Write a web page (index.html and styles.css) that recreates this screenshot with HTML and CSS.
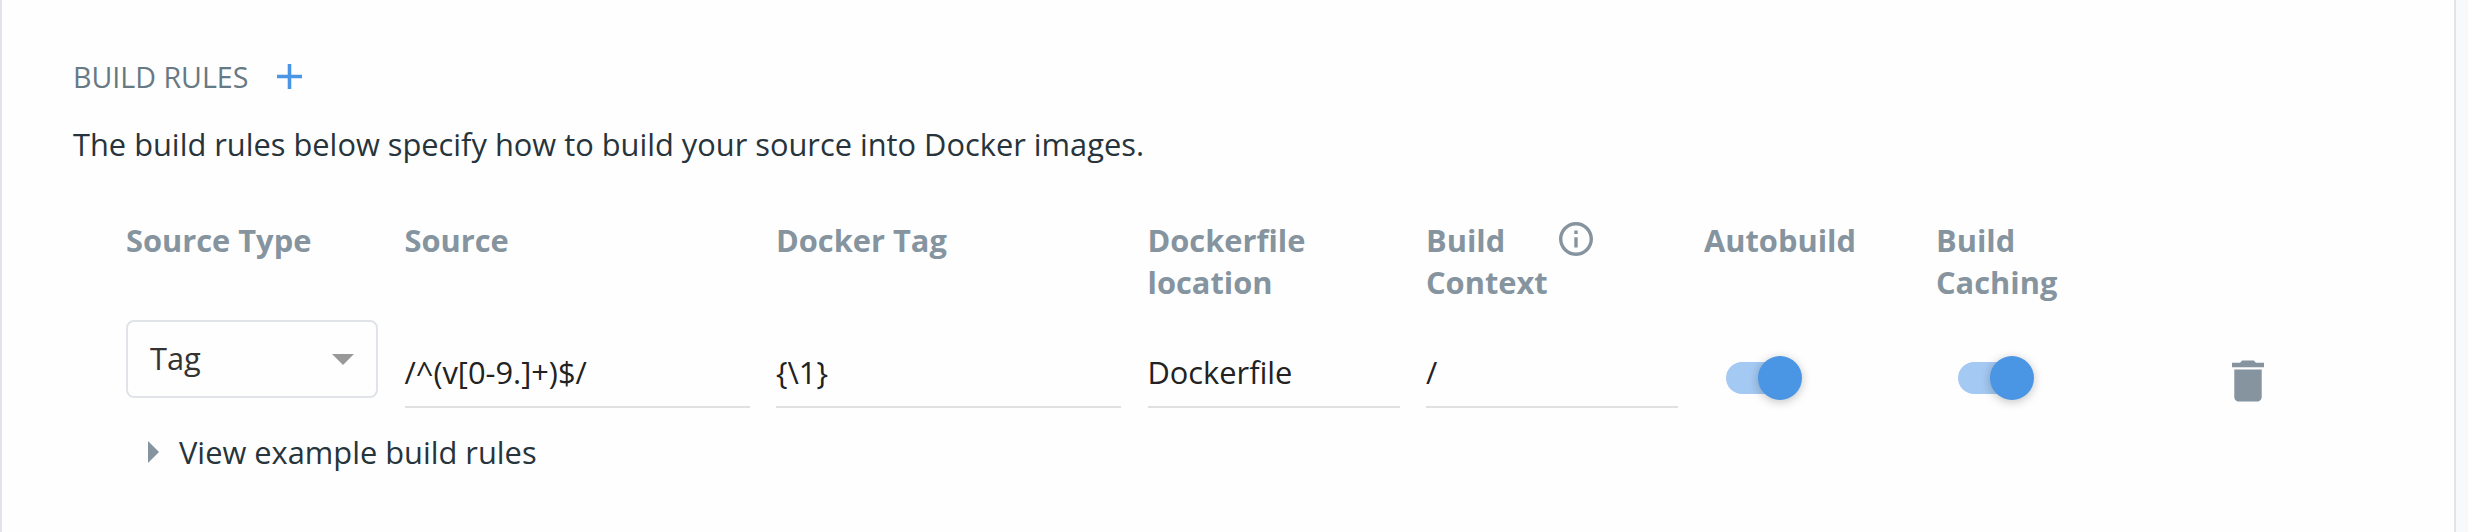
FILE: index.html
```html
<!DOCTYPE html>
<html lang="en">
<head>
<meta charset="utf-8">
<title>Build rules</title>
<link rel="stylesheet" href="styles.css">
</head>
<body>
<main class="card">
  <header class="title-row">
    <h2 class="title">BUILD RULES</h2>
    <svg class="add" viewBox="5 5 14 14"><path d="M19 13h-6v6h-2v-6H5v-2h6V5h2v6h6v2z"/></svg>
  </header>
  <p class="description">The build rules below specify how to build your source into Docker images.</p>
  <section class="rules">
    <div class="grid heads">
      <div>Source Type</div>
      <div>Source</div>
      <div>Docker Tag</div>
      <div>Dockerfile<br>location</div>
      <div class="with-info"><span>Build<br>Context</span>
        <svg class="info" viewBox="2 2 20 20"><path d="M11 17h2v-6h-2v6zm1-15C6.480 2 2 6.480 2 12s4.480 10 10 10 10-4.480 10-10S17.520 2 12 2zm0 18c-4.410 0-8-3.590-8-8s3.590-8 8-8 8 3.590 8 8-3.590 8-8 8zM11 9h2V7h-2v2z"/></svg>
      </div>
      <div>Autobuild</div>
      <div>Build<br>Caching</div>
    </div>
    <div class="grid fields">
      <div class="select"><span>Tag</span><i class="caret"></i></div>
      <div class="input">/^(v[0-9.]+)$/</div>
      <div class="input wide-gap">{\1}</div>
      <div class="input">Dockerfile</div>
      <div class="input">/</div>
      <div class="toggle"><span class="knob"></span></div>
      <div class="toggle"><span class="knob"></span></div>
      <svg class="trash" viewBox="5 3 14 18"><path d="M6 19c0 1.100.9 2 2 2h8c1.100 0 2-.9 2-2V7H6v12zM19 4h-3.500l-1-1h-5l-1 1H5v2h14V4z"/></svg>
    </div>
    <div class="example"><i class="arrow"></i><span>View example build rules</span></div>
  </section>
</main>
</body>
</html>
```
FILE: styles.css
```css
* { box-sizing: border-box; }
body {
  margin: 0;
  background: #f7f9fb;
  font-family: "Open Sans", sans-serif;
  font-size: 30.8px;
  line-height: 42px;
  color: #27343b;
}
.card {
  width: 2456px;
  height: 532px;
  padding: 56px 0 0 71px;
  background: #fefefe;
  border-left: 2px solid #e0e4e9;
  border-right: 2px solid #e0e4e7;
  overflow: hidden;
}
.title-row { display: flex; height: 42px; gap: 29px; }
.title {
  margin: 0;
  font-size: 28.6px;
  font-weight: 400;
  color: #677985;
}
.add { width: 25px; height: 25px; margin-top: 8px; fill: #4a95e6; }
.description { margin: 25px 0 0; }
.rules { margin: 54px 0 0 53px; }
.grid {
  display: grid;
  grid-template-columns: 278.5px 371.5px 371.5px 278.5px 278px 232px 296px 34px;
}
.heads { font-size: 30.8px; font-weight: 700; color: #85949e; }
.with-info { display: flex; justify-content: space-between; padding-right: 111px; }
.info { flex: none; width: 34px; height: 34px; margin-top: 3px; fill: #85949e; }
.fields { margin-top: 17px; height: 88px; align-items: start; }
.select {
  display: flex;
  align-items: center;
  justify-content: space-between;
  width: 252px;
  height: 78px;
  padding: 0 22px;
  border: 2px solid #e0e4e8;
  border-radius: 8px;
  color: #333;
}
.select span { margin-bottom: 2px; }
.caret {
  border-left: 11px solid transparent;
  border-right: 11px solid transparent;
  border-top: 11px solid #999;
}
.input {
  height: 88px;
  margin-right: 26px;
  padding-top: 31px;
  border-bottom: 2px solid #e0e0e0;
  color: #222;
}
.wide-gap { margin-right: 27px; }
.toggle {
  display: flex;
  align-items: center;
  justify-content: flex-end;
  width: 72px;
  height: 32px;
  margin: 42px 0 0 22px;
  border-radius: 16px;
  background: #a4c9f2;
}
.knob {
  flex: none;
  width: 44px;
  height: 44px;
  margin-right: -4px;
  border-radius: 50%;
  background: #4a95e4;
  box-shadow: 0 2px 12px rgba(0, 0, 0, .12), 0 2px 8px rgba(0, 0, 0, .12);
}
.trash { width: 32px; height: 42px; margin-top: 40px; fill: #85949e; }
.example { display: flex; align-items: center; gap: 20px; margin: 23px 0 0 22px; }
.arrow {
  border-top: 11px solid transparent;
  border-bottom: 11px solid transparent;
  border-left: 11px solid #85949e;
}
```
